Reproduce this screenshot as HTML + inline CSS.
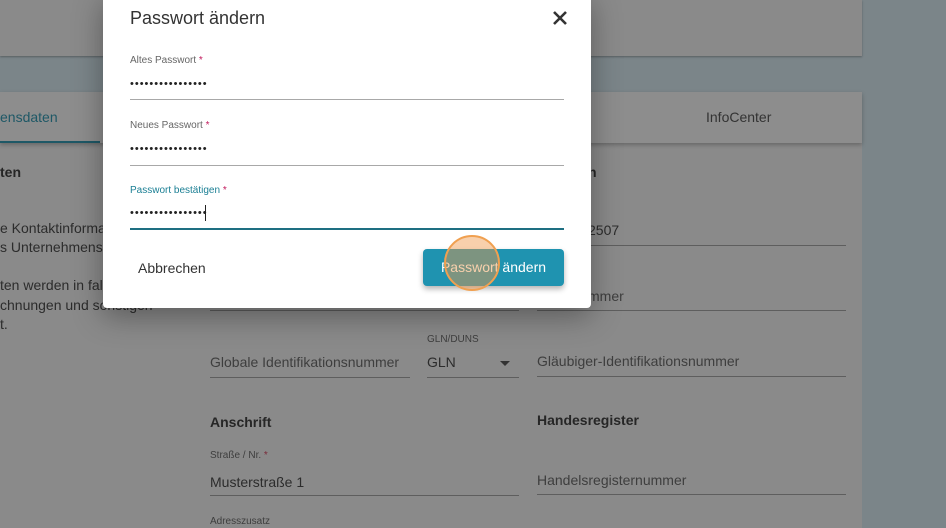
<!DOCTYPE html>
<html><head><meta charset="utf-8"><style>
*{margin:0;padding:0;box-sizing:border-box}
body{width:946px;height:528px;overflow:hidden;background:#7b8589;font-family:"Liberation Sans",sans-serif;position:relative}
.a{position:absolute;white-space:nowrap}
.card{position:absolute;background:#8a8a8a}
.t{color:#2c2c2c;font-size:14px}
.ph{color:#3e3e3e;font-size:14px}
.lb{color:#3e3e3e;font-size:10px}
.ln{position:absolute;height:1px;background:#5e5e5e}
.b{font-weight:bold;color:#262626;font-size:14px}
.dlg{position:absolute;left:103px;top:-6px;width:488px;height:314px;background:#fff;border-radius:4px;box-shadow:0 8px 30px rgba(0,0,0,.35)}
.dl{position:absolute;font-size:10px;color:#666}
.dl i{font-style:normal;color:#c2185b}
.dv{position:absolute;font-size:11px;color:#222;letter-spacing:1px}
.dln{position:absolute;left:27px;width:434px;height:1px;background:#a8a8a8}
</style></head><body>
<div class="card" style="left:0;top:0;width:862px;height:56px;box-shadow:0 1px 2px rgba(0,0,0,.3)"></div>
<div class="card" style="left:0;top:92px;width:862px;height:436px"></div>
<div class="card" style="left:0;top:92px;width:862px;height:51px;background:#8d8d8d;box-shadow:0 2px 4px rgba(0,0,0,.25)"></div>
<div class="a" style="left:0;top:109px;font-size:14px;color:#1e5866">ensdaten</div>
<div class="a" style="left:0;top:141px;width:100px;height:2px;background:#1e5866"></div>
<div class="a" style="left:706px;top:109px;font-size:14px;color:#333">InfoCenter</div>
<div class="a b" style="left:0;top:164px">ten</div>
<div class="a t" style="left:0;top:219px;line-height:19px">e Kontaktinforma<br>s Unternehmens i</div>
<div class="a t" style="left:0;top:276px;line-height:19.5px">ten werden in fal<br>chnungen und sonstigen<br>t.</div>
<div class="a b" style="left:588px;top:164px">n</div>
<div class="a t" style="left:588px;top:222px">2507</div>
<div class="ln" style="left:537px;top:245px;width:309px"></div>
<div class="a ph" style="left:588px;top:288px">mmer</div>
<div class="ln" style="left:537px;top:310px;width:309px"></div>
<div class="ln" style="left:210px;top:310px;width:309px"></div>
<div class="a lb" style="left:427px;top:334px">GLN/DUNS</div>
<div class="a ph" style="left:210px;top:354px">Globale Identifikationsnummer</div>
<div class="ln" style="left:210px;top:377px;width:200px"></div>
<div class="a t" style="left:427px;top:354px">GLN</div>
<div class="a" style="left:500px;top:361px;width:0;height:0;border-left:5px solid transparent;border-right:5px solid transparent;border-top:5px solid #333"></div>
<div class="ln" style="left:427px;top:377px;width:92px"></div>
<div class="a ph" style="left:537px;top:353px">Gläubiger-Identifikationsnummer</div>
<div class="ln" style="left:537px;top:376px;width:309px"></div>
<div class="a b" style="left:210px;top:414px">Anschrift</div>
<div class="a b" style="left:537px;top:412px">Handesregister</div>
<div class="a lb" style="left:210px;top:450px">Straße / Nr. <span style="color:#7a2a3a">*</span></div>
<div class="a t" style="left:210px;top:474px">Musterstraße 1</div>
<div class="ln" style="left:210px;top:495px;width:309px"></div>
<div class="a ph" style="left:537px;top:472px">Handelsregisternummer</div>
<div class="ln" style="left:537px;top:494px;width:309px"></div>
<div class="a lb" style="left:210px;top:516px">Adresszusatz</div>

<div class="dlg">
<div class="a" style="left:27px;top:14px;font-size:18px;color:#333">Passwort ändern</div>
<svg class="a" style="left:449px;top:16px" width="16" height="16" viewBox="0 0 16 16"><path d="M2 2L14 14M14 2L2 14" stroke="#333" stroke-width="2.6"/></svg>
<div class="dl" style="left:27px;top:61px">Altes Passwort <i>*</i></div>
<div class="dv" style="left:27px;top:84px">••••••••••••••••</div>
<div class="dln" style="top:105px"></div>
<div class="dl" style="left:27px;top:126px">Neues Passwort <i>*</i></div>
<div class="dv" style="left:27px;top:149px">••••••••••••••••</div>
<div class="dln" style="top:171px"></div>
<div class="dl" style="left:27px;top:191px;color:#1b7f94">Passwort bestätigen <i>*</i></div>
<div class="dv" style="left:27px;top:213px">••••••••••••••••</div>
<div class="a" style="left:102px;top:211px;width:1px;height:16px;background:#222"></div>
<div class="dln" style="top:234px;height:2px;background:#1e6f82"></div>
<div class="a" style="left:35px;top:266px;font-size:14px;color:#333">Abbrechen</div>
<div class="a" style="left:320px;top:255px;width:141px;height:37px;background:#1f93b0;border-radius:4px;box-shadow:0 3px 6px rgba(0,0,0,.3);color:#fff;font-size:14px;line-height:37px;text-align:center">Passwort ändern</div>
<div class="a" style="left:341px;top:241px;width:56px;height:56px;border-radius:50%;background:rgba(240,150,70,.45);border:2px solid #f0a050"></div>
</div>
</body></html>
